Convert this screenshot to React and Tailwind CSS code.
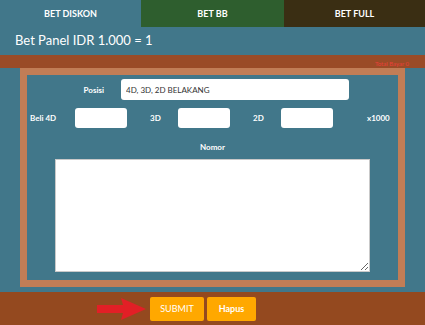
import React, { useState } from 'react';

const App = () => {
  const [posisi, setPosisi] = useState('4D, 3D, 2D BELAKANG');
  const [nomor, setNomor] = useState('');

  return (
    <div className="w-[425px] h-[325px] flex flex-col bg-[#41778a] text-white overflow-hidden" style={{ fontFamily: 'Lato, "Open Sans", sans-serif' }}>
      <div className="flex h-[27px] text-[9px] font-bold">
        <div className="w-[141px] flex items-center justify-center bg-[#41778a]">BET DISKON</div>
        <div className="w-[143px] flex items-center justify-center bg-[#2e5e2e]">BET BB</div>
        <div className="flex-1 flex items-center justify-center bg-[#3a2e13]">BET FULL</div>
      </div>

      <div className="h-[28px] flex items-center px-[15px] text-[13px]">Bet Panel IDR 1.000 = 1</div>

      <div className="h-[13px] bg-[#9a4b27] flex items-end justify-end pr-[16px]">
        <span className="text-[6px] leading-[8px] text-[#e8403a]">Total Bayar 0</span>
      </div>

      <div className="mx-[20px] h-[219px] border-[7px] border-[#c17d56] flex flex-col">
        <div className="flex items-center mt-[4px] h-[21px]">
          <label className="w-[77px] text-right text-[8px] font-bold">Posisi</label>
          <input
            type="text"
            value={posisi}
            onChange={(e) => setPosisi(e.target.value)}
            className="ml-[17px] w-[228px] h-[21px] bg-white rounded-[3px] px-[5px] text-[8px] text-[#333] focus:outline-none"
          />
        </div>

        <div className="flex items-center mt-[8px] h-[20px] text-[8px] font-bold">
          <label className="ml-[3px] w-[45px]">Beli 4D</label>
          <input type="text" className="w-[52px] h-[20px] bg-white rounded-[3px] focus:outline-none" />
          <label className="ml-[23px] w-[28px]">3D</label>
          <input type="text" className="w-[52px] h-[20px] bg-white rounded-[3px] focus:outline-none" />
          <label className="ml-[23px] w-[28px]">2D</label>
          <input type="text" className="w-[52px] h-[20px] bg-white rounded-[3px] focus:outline-none" />
          <span className="ml-[34px]">x1000</span>
        </div>

        <div className="mt-[14px] text-center text-[8px] font-bold leading-[10px]">Nomor</div>

        <div className="flex justify-center mt-[7px]">
          <textarea
            value={nomor}
            onChange={(e) => setNomor(e.target.value)}
            className="w-[315px] h-[113px] bg-white border border-[#c9c9c9] text-[#333] text-[8px] focus:outline-none"
          />
        </div>
      </div>

      <div className="h-[5px]"></div>

      <div className="flex-1 bg-[#94491f] flex items-center pl-[97px]">
        <svg width="49" height="22" viewBox="0 0 49 22" className="mr-[4px]">
          <path d="M0 7 L26 7 L24 0 L49 11 L24 22 L26 15 L0 15 Z" fill="#e21f26" />
        </svg>
        <button className="w-[54px] h-[24px] bg-[#ffa800] rounded-[2px] text-[9px] text-white">SUBMIT</button>
        <button className="ml-[3px] w-[49px] h-[24px] bg-[#ffa800] rounded-[2px] text-[9px] text-white font-bold">Hapus</button>
      </div>
    </div>
  );
};

export default App;
